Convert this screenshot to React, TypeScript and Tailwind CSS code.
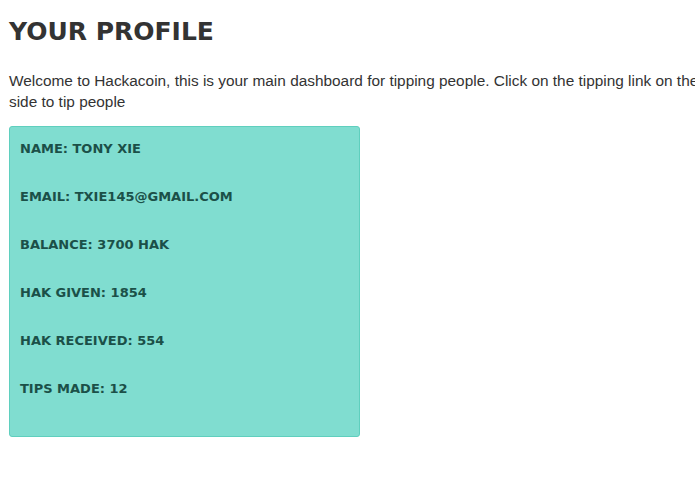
const stats = [
  'Name: Tony Xie',
  'Email: txie145@gmail.com',
  'Balance: 3700 HAK',
  'HAK Given: 1854',
  'HAK Received: 554',
  'Tips Made: 12',
];

const App = () => {
  return (
    <div className="w-[695px] h-[494px] overflow-hidden bg-white">
      <div className="w-[730px] pl-[9px] pt-[16px]">
        <h1 className="font-['DejaVu_Sans',sans-serif] font-bold uppercase text-[25px] leading-[32px] text-[#333333]">
          Your Profile
        </h1>
        <p className="mt-[22px] font-['Liberation_Sans',Arial,sans-serif] text-[15.4px] leading-[21px] text-[#333333]">
          Welcome to Hackacoin, this is your main dashboard for tipping people. Click on the tipping link on the left
          side to tip people
        </p>
        {/* profile card */}
        <div className="mt-[14px] w-[351px] rounded-[3px] border border-[#5fcfbe] bg-[#80ddd0] pl-[10px] pt-[12px] pb-[9px]">
          {stats.map(s => (
            <p
              key={s}
              className="mb-[28px] font-['DejaVu_Sans',sans-serif] font-semibold uppercase text-[13px] leading-[20px] text-[#1b5048]"
            >
              {s}
            </p>
          ))}
        </div>
      </div>
    </div>
  );
};

export default App;
